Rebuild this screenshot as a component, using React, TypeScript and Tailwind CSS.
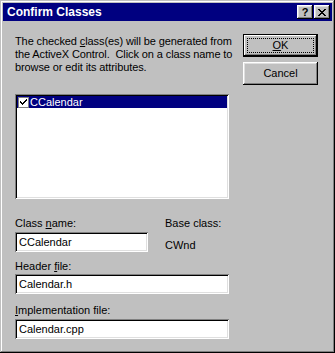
import React from 'react';

const raised =
  'shadow-[inset_-1px_-1px_#000,inset_1px_1px_#fff,inset_-2px_-2px_#808080,inset_2px_2px_#dfdfdf]';
const sunken =
  'shadow-[inset_1px_1px_#808080,inset_-1px_-1px_#fff,inset_2px_2px_#000,inset_-2px_-2px_#dfdfdf]';

function TitleButton({ children }: { children: React.ReactNode }) {
  return (
    <div
      className={`w-[16px] h-[14px] bg-[#c0c0c0] ${raised} flex items-center justify-center text-black text-[11px] font-bold leading-none`}
    >
      {children}
    </div>
  );
}

function Field({ value, className = '' }: { value: string; className?: string }) {
  return (
    <div className={`h-[20px] bg-white ${sunken} px-[4px] flex items-center ${className}`}>
      <span>{value}</span>
    </div>
  );
}

export default function App() {
  return (
    <div
      className="w-[335px] h-[353px] bg-[#c0c0c0] shadow-[inset_-1px_-1px_#000,inset_1px_1px_#c0c0c0,inset_-2px_-2px_#808080,inset_2px_2px_#fff] p-[3px] text-[11px] leading-[13px] text-black"
      style={{ fontFamily: '"Liberation Sans", Arial, sans-serif' }}
    >
      {/* Title bar */}
      <div className="h-[18px] bg-[#000080] flex items-center pl-[4px] pr-[2px]">
        <span className="text-white font-bold text-[12px] flex-1">Confirm Classes</span>
        <div className="flex">
          <TitleButton>?</TitleButton>
          <div className="ml-[1px]">
            <TitleButton>
              <svg width="8" height="7" viewBox="0 0 8 7">
                <path d="M0 0h2v1h1v1h2V1h1V0h2v1H7v1H6v1H5v1h1v1h1v1h1v1H6V6H5V5H3v1H2v1H0V6h1V5h1V4h1V3H2V2H1V1H0z" fill="#000" />
              </svg>
            </TitleButton>
          </div>
        </div>
      </div>

      <div className="flex pl-[12px] pt-[14px]">
        {/* Left column */}
        <div className="w-[214px] flex flex-col">
          <p className="whitespace-nowrap tracking-[-0.1px]">
            The checked <span className="underline">c</span>lass(es) will be generated from
            <br />
            the ActiveX Control.&nbsp; Click on a class name to
            <br />
            browse or edit its attributes.
          </p>

          <div className={`mt-[20px] h-[105px] bg-white ${sunken} p-[2px]`}>
            <div className="h-[12px] flex items-center bg-[#000080] text-white">
              <div className="w-[11px] h-[11px] bg-white ml-[1px] shadow-[inset_1px_1px_#808080,inset_-1px_-1px_#808080] flex items-center justify-center">
                <svg width="7" height="7" viewBox="0 0 7 7">
                  <path d="M0 2h1v1h1v1h1V3h1V2h1V1h1V0h1v2H6v1H5v1H4v1H3v1H2V5H1V4H0z" fill="#000" />
                </svg>
              </div>
              <span className="ml-[1px]">CCalendar</span>
            </div>
          </div>

          <div className="mt-[18px] flex">
            <div className="w-[150px]">
              <div>
                Class <span className="underline">n</span>ame:
              </div>
              <Field value="CCalendar" className="mt-[2px] w-[133px]" />
            </div>
            <div>
              <div>Base class:</div>
              <div className="mt-[9px]">CWnd</div>
            </div>
          </div>

          <div className="mt-[8px]">
            Header <span className="underline">f</span>ile:
          </div>
          <Field value="Calendar.h" className="mt-[1px]" />

          <div className="mt-[10px]">
            <span className="underline">I</span>mplementation file:
          </div>
          <Field value="Calendar.cpp" className="mt-[2px]" />
        </div>

        {/* Right column */}
        <div className="ml-[14px] -mt-[1px] flex flex-col">
          <div className="w-[75px] h-[23px] bg-[#c0c0c0] shadow-[inset_-1px_-1px_#000,inset_1px_1px_#000,inset_-2px_-2px_#000,inset_2px_2px_#fff,inset_-3px_-3px_#808080] flex items-center justify-center p-[4px]">
            <div className="w-full h-full border border-dotted border-black flex items-center justify-center">
              <span>
                <span className="underline">O</span>K
              </span>
            </div>
          </div>
          <div className={`mt-[5px] w-[75px] h-[23px] bg-[#c0c0c0] ${raised} flex items-center justify-center`}>
            Cancel
          </div>
        </div>
      </div>
    </div>
  );
}
